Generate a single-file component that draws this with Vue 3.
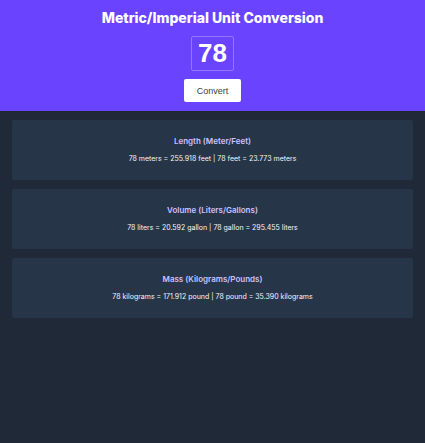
<script setup>
import { ref, computed } from 'vue'

const entry = ref('78')
const amount = ref(78)

const units = [
  { title: 'Length (Meter/Feet)', metric: 'meters', imperial: 'feet', factor: 3.281 },
  { title: 'Volume (Liters/Gallons)', metric: 'liters', imperial: 'gallon', factor: 0.264 },
  { title: 'Mass (Kilograms/Pounds)', metric: 'kilograms', imperial: 'pound', factor: 2.204 }
]

const cards = computed(() =>
  units.map(({ title, metric, imperial, factor }) => ({
    title,
    text: `${amount.value} ${metric} = ${(amount.value * factor).toFixed(3)} ${imperial} | ${amount.value} ${imperial} = ${(amount.value / factor).toFixed(3)} ${metric}`
  }))
)

function convert() {
  amount.value = Number(entry.value) || 0
}
</script>

<template>
  <div class="page">
    <form class="hero" @submit.prevent="convert">
      <h1 class="title">Metric/Imperial Unit Conversion</h1>
      <input v-model="entry" class="value" type="text" inputmode="decimal" aria-label="Value to convert" />
      <button class="convert" type="submit">Convert</button>
    </form>
    <main class="cards">
      <section v-for="card in cards" :key="card.title" class="card">
        <h2 class="card-title">{{ card.title }}</h2>
        <p class="card-text">{{ card.text }}</p>
      </section>
    </main>
  </div>
</template>

<style>
body {
  background: #1f2937;
}
</style>

<style scoped>
.page {
  font-family: Inter, sans-serif;
  text-align: center;
}
.hero {
  display: flex;
  flex-direction: column;
  align-items: center;
  padding: 9px 12px;
  background: #6943ff;
}
.title {
  margin: 0;
  font-size: 14px;
  line-height: 18px;
  font-weight: 800;
  color: #fff;
}
.value {
  box-sizing: border-box;
  width: 43px;
  height: 35px;
  margin: 9px 0 8px;
  padding: 0;
  border: 1px solid #9276ff;
  border-radius: 2px;
  background: transparent;
  font-family: "Liberation Sans", Arial, sans-serif;
  font-size: 26px;
  font-weight: 700;
  text-align: center;
  color: #fff;
}
.convert {
  height: 23px;
  padding: 0 13px;
  border: 0;
  border-radius: 2px;
  background: #fff;
  font-family: "Liberation Sans", Arial, sans-serif;
  font-size: 9px;
  color: #3d3d3d;
}
.cards {
  display: grid;
  gap: 9px;
  padding: 9px 12px;
}
.card {
  padding: 15px 8px 16px;
  border-radius: 2px;
  background: #273549;
}
.card-title {
  margin: 0 0 5px;
  font-size: 8px;
  line-height: 13px;
  font-weight: 600;
  color: #ccc1ff;
}
.card-text {
  margin: 0;
  font-size: 7px;
  line-height: 11px;
  color: #f4f5f7;
}
</style>
